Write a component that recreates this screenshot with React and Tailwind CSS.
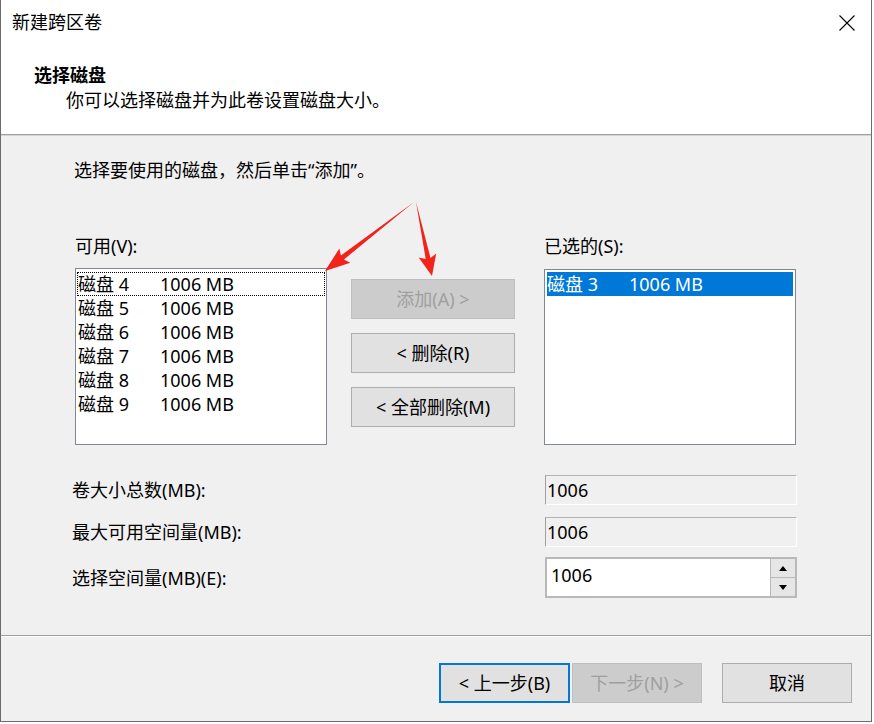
import React from "react";

const disks = [4, 5, 6, 7, 8, 9];

function Btn({ children, disabled, primary, className = "" }) {
  const base = "h-[40px] w-full flex items-center justify-center text-[18px] leading-[24px] border";
  let style = "bg-[#e1e1e1] border-[#adadad] text-black";
  if (disabled) style = "bg-[#cccccc] border-[#bfbfbf] text-[#9f9f9f]";
  if (primary) style = "bg-[#e1e1e1] border-[#0078d7] shadow-[inset_0_0_0_1px_#0078d7] text-black";
  return <div className={`${base} ${style} ${className}`}>{children}</div>;
}

function ReadOnlyField({ value }) {
  return (
    <div className="w-[252px] h-[30px] bg-[#f0f0f0] border-t border-l border-t-[#b4b4b4] border-l-[#a0a0a0] border-b border-r border-b-white border-r-white flex items-center pl-[1px] text-[18px] leading-[24px]">
      {value}
    </div>
  );
}

export default function App() {
  return (
    <div className="w-[874px] h-[724px] bg-white relative overflow-hidden font-['Noto_Sans','Noto_Sans_CJK_SC',sans-serif] text-black">
      <div className="w-[872px] h-[722px] border-l border-r border-b border-[#6b6b6b] flex flex-col bg-[#f0f0f0]">
        {/* Header (white) */}
        <div className="bg-white h-[134px] flex flex-col">
          <div className="h-[44px] flex items-center justify-between pl-[11px] pr-[16px]">
            <span className="text-[18px] leading-[24px]">新建跨区卷</span>
            <svg width="16" height="16" viewBox="0 0 16 16" className="mt-[2px]">
              <path d="M0.5 0.5 L15.5 15.5 M15.5 0.5 L0.5 15.5" stroke="#000" strokeWidth="1.1" fill="none" />
            </svg>
          </div>
          <div className="pt-[19px] pl-[33px] text-[18px] leading-[24px] font-bold">选择磁盘</div>
          <div className="pt-[1px] pl-[65px] text-[18px] leading-[24px]">你可以选择磁盘并为此卷设置磁盘大小。</div>
        </div>
        <div className="h-[1px] bg-[#a0a0a0]" />
        <div className="h-[1px] bg-[#d4d4d4]" />

        {/* Body */}
        <div className="h-[499px] pl-[71px] pt-[22px] text-[18px] leading-[24px]">
          <p className="ml-[2px]">选择要使用的磁盘，然后单击“添加”。</p>
          <div className="mt-[52px] ml-[3px] flex">
            <div className="w-[252px]">
              <div className="h-[24px]">可用(V):</div>
              <div className="mt-[10px] h-[177px] bg-white border border-[#828790] pt-[3px] px-[1px]">
                {disks.map((d, i) => (
                  <div
                    key={d}
                    className={`h-[24px] flex items-center ${i === 0 ? "border border-dotted border-black" : "border border-transparent"}`}
                  >
                    <span className="w-[82px]">磁盘 {d}</span>
                    <span>1006 MB</span>
                  </div>
                ))}
              </div>
            </div>
            <div className="w-[164px] ml-[24px] pt-[45px] flex flex-col gap-[14px]">
              <Btn disabled>添加(A) &gt;</Btn>
              <Btn>&lt; 删除(R)</Btn>
              <Btn>&lt; 全部删除(M)</Btn>
            </div>
            <div className="w-[252px] ml-[29px]">
              <div className="h-[24px]">已选的(S):</div>
              <div className="mt-[11px] h-[176px] bg-white border border-[#828790] pt-[2px] px-[2px]">
                <div className="h-[24px] flex items-center bg-[#0078d7] text-white">
                  <span className="w-[82px]">磁盘 3</span>
                  <span>1006 MB</span>
                </div>
              </div>
            </div>
          </div>

          <div className="mt-[30px] flex flex-col w-[725px]">
            <div className="flex items-center justify-between">
              <span>卷大小总数(MB):</span>
              <ReadOnlyField value="1006" />
            </div>
            <div className="mt-[12px] flex items-center justify-between">
              <span>最大可用空间量(MB):</span>
              <ReadOnlyField value="1006" />
            </div>
            <div className="mt-[10px] flex items-center justify-between">
              <span>选择空间量(MB)(E):</span>
              <div className="w-[252px] h-[41px] border-2 border-[#b9b9b9] bg-white flex">
                <div className="flex-1 pl-[4px] pt-[4px]">1006</div>
                <div className="w-[25px] flex flex-col border-l border-[#b9b9b9]">
                  <div className="flex-1 bg-[#e6e6e6] flex items-center justify-center border-b border-[#b9b9b9]">
                    <svg width="8" height="5" viewBox="0 0 8 5"><path d="M0 5 L4 0 L8 5 Z" fill="#000" /></svg>
                  </div>
                  <div className="flex-1 bg-[#e6e6e6] flex items-center justify-center">
                    <svg width="8" height="5" viewBox="0 0 8 5"><path d="M0 0 L4 5 L8 0 Z" fill="#000" /></svg>
                  </div>
                </div>
              </div>
            </div>
          </div>
        </div>

        <div className="h-[1px] bg-[#a0a0a0]" />
        <div className="h-[1px] bg-white" />

        {/* Footer */}
        <div className="flex-1 flex justify-end items-start pt-[26px] pr-[19px]">
          <div className="w-[131px]"><Btn primary>&lt; 上一步(B)</Btn></div>
          <div className="w-[130px] ml-[2px]"><Btn disabled>下一步(N) &gt;</Btn></div>
          <div className="w-[130px] ml-[20px]"><Btn>取消</Btn></div>
        </div>
      </div>

      {/* Red annotation arrows */}
      <svg className="absolute left-0 top-0 pointer-events-none" width="874" height="724" viewBox="0 0 874 724">
        <polygon
          points="414,202 343.9,259.5 350.3,262.8 325,271 339.3,248.6 340.9,255.5"
          fill="#f2231a"
        />
        <polygon
          points="416,202 430.5,257.9 436.2,253.5 432,276 418.7,257.4 425.7,258.9"
          fill="#f2231a"
        />
      </svg>
    </div>
  );
}
